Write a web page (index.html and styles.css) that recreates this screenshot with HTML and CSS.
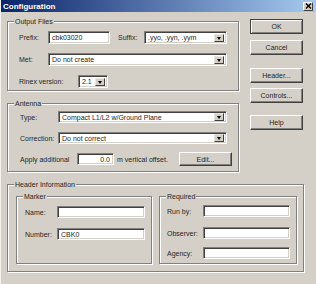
FILE: index.html
```html
<!DOCTYPE html>
<html lang="en">
<head>
  <meta charset="UTF-8" />
  <title>Configuration</title>
  <link rel="stylesheet" href="styles.css">
</head>
<body>
  <div class="window">
    <div class="titlebar">
      <span class="title">Configuration</span>
      <span class="close">
        <svg width="7" height="6" viewBox="0 0 7 6"><path d="M1 0.5 L6 5.5 M6 0.5 L1 5.5" stroke="#000" stroke-width="1.4"/></svg>
      </span>
    </div>

    <div class="body">
      <div class="top">
        <div class="left">
          <!-- Output files -->
          <div class="group output">
            <span class="group-title">Output Files</span>
            <div class="row">
              <span class="lbl w29">Prefix:</span>
              <input class="field" style="width:62px" value="cbk03020">
              <span class="lbl suffix-lbl">Suffix:</span>
              <div class="combo" style="width:83px"><span>.yyo, .yyn, .yym</span><i class="arrow"></i></div>
            </div>
            <div class="row">
              <span class="lbl w29">Met:</span>
              <div class="combo" style="width:179px"><span>Do not create</span><i class="arrow"></i></div>
            </div>
            <div class="row">
              <span class="lbl w59">Rinex version:</span>
              <div class="combo" style="width:30px"><span>2.1</span><i class="arrow"></i></div>
            </div>
          </div>

          <!-- Antenna -->
          <div class="group antenna">
            <span class="group-title">Antenna</span>
            <div class="row">
              <span class="lbl w38">Type:</span>
              <div class="combo" style="width:169px"><span>Compact L1/L2 w/Ground Plane</span><i class="arrow"></i></div>
            </div>
            <div class="row">
              <span class="lbl w38">Correction:</span>
              <div class="combo" style="width:169px"><span>Do not correct</span><i class="arrow"></i></div>
            </div>
            <div class="row apply">
              <span class="lbl w57">Apply additional</span>
              <input class="field num" style="width:37px" value="0.0">
              <span class="lbl unit">m vertical offset.</span>
              <button class="btn edit">Edit...</button>
            </div>
          </div>
        </div>

        <div class="buttons">
          <button class="btn default">OK</button>
          <button class="btn cancel">Cancel</button>
          <button class="btn header">Header...</button>
          <button class="btn controls">Controls...</button>
          <button class="btn help">Help</button>
        </div>
      </div>

      <!-- Header information -->
      <div class="group header-info">
        <span class="group-title">Header Information</span>
        <div class="group marker">
          <span class="group-title">Marker</span>
          <div class="row">
            <span class="lbl w32">Name:</span>
            <input class="field" style="width:88px" value="">
          </div>
          <div class="row">
            <span class="lbl w32">Number:</span>
            <input class="field" style="width:88px" value="CBK0">
          </div>
        </div>
        <div class="group required">
          <span class="group-title">Required</span>
          <div class="row">
            <span class="lbl w36">Run by:</span>
            <input class="field" style="width:87px" value="">
          </div>
          <div class="row">
            <span class="lbl w36">Observer:</span>
            <input class="field" style="width:87px" value="">
          </div>
          <div class="row last">
            <span class="lbl w36">Agency:</span>
            <input class="field" style="width:87px" value="">
          </div>
        </div>
      </div>
    </div>
  </div>
</body>
</html>
```

FILE: styles.css
```css
* {
  box-sizing: border-box;
  margin: 0;
  padding: 0;
}

body {
  font-family: 'Liberation Sans', Arial, sans-serif;
  font-size: 7px;
  color: #262626;
  background: #d4d0c8;
}

.window {
  width: 316px;
  height: 284px;
  background: #d4d0c8;
  border-left: 1px solid #f4f3ee;
  overflow: hidden;
}

.titlebar {
  height: 12px;
  background: linear-gradient(to right, #0a246a, #a6caf0);
  display: flex;
  align-items: center;
  justify-content: space-between;
  padding: 0 3px 0 2px;
}

.title {
  color: #fff;
  font-weight: bold;
  font-size: 8px;
}

.close {
  width: 10px;
  height: 9px;
  background: #d4d0c8;
  border: 1px solid;
  border-color: #fff #404040 #404040 #fff;
  display: flex;
  align-items: center;
  justify-content: center;
}

.body {
  padding: 7px 0 0 6px;
}

.top {
  display: flex;
  gap: 11px;
}

.left {
  margin-top: 2px;
  width: 232px;
  display: flex;
  flex-direction: column;
  gap: 12px;
}

/* etched group box */
.group {
  position: relative;
  border: 1px solid #808080;
  box-shadow: inset 1px 1px #fff, 1px 1px #fff;
}

.group-title {
  position: absolute;
  top: -5px;
  left: 6px;
  padding: 0 1px;
  line-height: 9px;
  background: #d4d0c8;
}

.row {
  display: flex;
  align-items: center;
  height: 12px;
}

.lbl {
  white-space: nowrap;
}

.w29 { width: 29px; }
.w32 { width: 32px; }
.w36 { width: 36px; }
.w38 { width: 38px; }
.w57 { width: 57px; }
.w59 { width: 59px; }

.field,
.combo {
  height: 12px;
  background: #fff;
  border: 1px solid;
  border-color: #808080 #fff #fff #808080;
  box-shadow: inset 1px 1px #404040, inset -1px -1px #d4d0c8;
  font: inherit;
  color: #262626;
  padding: 0 3px;
  outline: none;
}

.field.num {
  text-align: right;
}

.combo {
  display: flex;
  align-items: center;
  justify-content: space-between;
  padding: 0 2px 0 3px;
  white-space: nowrap;
  overflow: hidden;
}

.arrow {
  flex: none;
  width: 10px;
  height: 8px;
  background: #d4d0c8;
  border: 1px solid;
  border-color: #e8e6e0 #404040 #404040 #e8e6e0;
  position: relative;
}

.arrow::after {
  content: '';
  position: absolute;
  left: 2px;
  top: 2px;
  border-left: 2.5px solid transparent;
  border-right: 2.5px solid transparent;
  border-top: 3px solid #000;
}

.output {
  height: 70px;
  padding: 9px 0 0 11px;
  display: flex;
  flex-direction: column;
  gap: 9px;
}

.output .row {
  height: 13px;
}

.output .row .field,
.output .row .combo {
  height: 13px;
}

.suffix-lbl {
  margin-left: 8px;
  width: 26px;
}

.antenna {
  height: 69px;
  padding: 7px 6px 0 12px;
  display: flex;
  flex-direction: column;
  gap: 9px;
}

.apply {
  height: 14px;
  margin-top: -1px;
}

.unit {
  margin-left: 3px;
}

.btn {
  width: 53px;
  height: 15px;
  background: #d4d0c8;
  border: 1px solid;
  border-color: #fff #404040 #404040 #fff;
  box-shadow: inset -1px -1px #808080;
  font: inherit;
  color: #262626;
}

.btn.default {
  border-color: #404040;
  box-shadow: inset 1px 1px #fff, inset -1px -1px #808080;
}

.edit {
  margin-left: auto;
  height: 14px;
}

.buttons {
  display: flex;
  flex-direction: column;
}

.cancel { margin-top: 6px; }
.header { margin-top: 13px; }
.controls { margin-top: 5px; }
.help { margin-top: 12px; }

.header-info {
  margin-top: 12px;
  width: 297px;
  height: 88px;
  padding: 11px 0 0 8px;
  display: flex;
  align-items: flex-start;
  gap: 7px;
}

.marker {
  width: 136px;
  height: 68px;
  padding: 9px 0 0 8px;
  display: flex;
  flex-direction: column;
  gap: 10px;
}

.required {
  width: 138px;
  height: 68px;
  padding: 8px 0 0 7px;
  display: flex;
  flex-direction: column;
  gap: 10px;
}

.required .last {
  margin-top: -2px;
}
```
